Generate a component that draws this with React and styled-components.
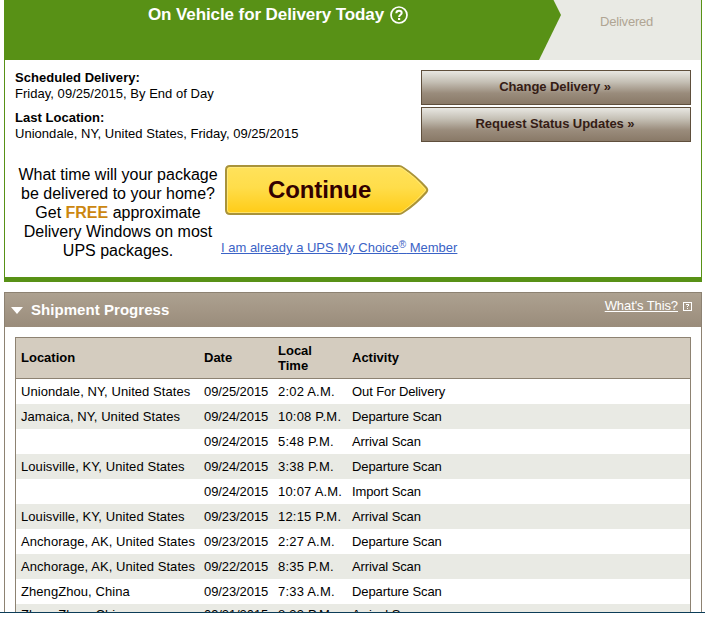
import React from 'react';
import styled, { createGlobalStyle } from 'styled-components';

const GlobalStyle = createGlobalStyle`
  * {
    box-sizing: border-box;
  }

  body {
    margin: 0;
    background: #fff;
    color: #000;
    font: 13px/16px "Liberation Sans", Arial, sans-serif;
  }
`;

const Page = styled.div`
  height: 617px;
  overflow: hidden;
`;

const Viewport = styled.div`
  height: 613px;
  padding: 0 3px 0 4px;
  overflow: hidden;
  border-bottom: 1px solid #0c3d58;
`;

const StatusPanel = styled.section`
  height: 282px;
  border: solid #589116;
  border-width: 0 1px 5px 1px;
`;

const StepBar = styled.div`
  display: flex;
  height: 60px;
  margin-left: -1px;
  background: #e9eae4;
`;

const CurrentStep = styled.div`
  display: flex;
  justify-content: center;
  align-items: flex-start;
  gap: 6px;
  width: 557px;
  padding: 5px 9px 0 0;
  background: #589116;
  color: #fff;
  clip-path: polygon(0 0, 549.5px 0, 557px 15px, 535px 60px, 0 60px);
`;

const StepTitle = styled.h1`
  margin: 0;
  font-size: 17px;
  line-height: 20px;
  letter-spacing: -0.09px;
`;

const NextStep = styled.div`
  flex: 1;
  padding: 14px 0 0 39px;
  color: #b0a593;
  letter-spacing: -0.2px;
`;

const StatusBody = styled.div`
  display: flex;
  justify-content: space-between;
  height: 103px;
  padding: 10px 10px 0 10px;
`;

const Details = styled.dl`
  margin: 0;
  letter-spacing: 0.03px;

  dt {
    font-weight: bold;
  }

  dd {
    margin: 0 0 8px;
  }
`;

const Actions = styled.div`
  display: flex;
  flex-direction: column;
  gap: 2px;
  width: 270px;
`;

const ActionButton = styled.button`
  height: 35px;
  padding: 0 2px 2px 0;
  border: 1px solid #5f4f3c;
  background: linear-gradient(#e8e7e2, #c5c0b5 33%, #9a8c7c 67%, #897967);
  color: #351c15;
  font: bold 13px/16px "Liberation Sans", Arial, sans-serif;
  letter-spacing: -0.06px;
`;

const Promo = styled.div`
  display: flex;
  height: 114px;
`;

const PromoText = styled.p`
  width: 216px;
  margin: 2px 0 0 5px;
  font-size: 16px;
  line-height: 19px;
  text-align: center;

  strong {
    color: #cc8710;
  }
`;

const PromoLinks = styled.div`
  display: flex;
  flex-direction: column;
  align-items: flex-start;
  margin-left: -5px;
  padding-top: 2px;
`;

const ContinueButton = styled.button`
  display: grid;
  margin: 0 0 0 4px;
  padding: 0;
  border: 0;
  background: none;
  color: #330000;
  font: bold 24px/28px "Liberation Sans", Arial, sans-serif;

  > * {
    grid-area: 1 / 1;
  }
`;

const ContinueLabel = styled.span`
  align-self: center;
  padding-left: 43px;
  text-align: left;
  letter-spacing: -0.1px;
`;

const MemberLink = styled.a`
  margin-top: 25px;
  color: #3b63c6;
  text-decoration: underline;
  white-space: nowrap;

  sup {
    font-size: 10px;
    line-height: 0;
    vertical-align: 4px;
  }
`;

const ProgressPanel = styled.section`
  margin-top: 10px;
  border: 1px solid #8d8272;
  border-bottom: 0;
`;

const ProgressHeader = styled.header`
  display: flex;
  height: 34px;
  padding: 0 9px 0 6px;
  background: linear-gradient(#ada190, #9a8c7b);
  color: #fff;
`;

const Caret = styled.span`
  margin: 14px 7px 0 0;
  border: solid transparent;
  border-width: 7px 6.5px 0;
  border-top-color: #fff;
  align-self: flex-start;
`;

const ProgressTitle = styled.h2`
  flex: 1;
  margin: 0;
  font-size: 15px;
  line-height: 34px;
  letter-spacing: 0.05px;
  text-indent: 1px;
`;

const HelpLink = styled.a`
  display: flex;
  gap: 5px;
  padding-top: 5px;
  text-decoration: none;

  span {
    text-decoration: underline;
    letter-spacing: -0.1px;
  }

  svg {
    margin-top: 4px;
  }
`;

const TableWrap = styled.div`
  padding: 10px;
`;

const Table = styled.div`
  border: 1px solid #8d8272;
`;

const Row = styled.div`
  display: grid;
  grid-template-columns: 183px 74px 74px 1fr;
  align-items: center;
  height: 25px;
  padding-left: 5px;
  background: ${({ $shaded }) => ($shaded ? '#e9eae4' : '#fff')};
  white-space: nowrap;

  &:last-child {
    padding-bottom: 3px;
  }
`;

const HeadRow = styled(Row)`
  height: 41px;
  padding-bottom: 1px;
  border-bottom: 1px solid #8d8272;
  background: #d4ccbf;
  font-weight: bold;
  line-height: 15px;
`;

const Cell = styled.span`
  letter-spacing: ${({ $tracking }) => $tracking}px;
`;

const scans = [
  ['Uniondale, NY, United States', '09/25/2015', '2:02 A.M.', 'Out For Delivery'],
  ['Jamaica, NY, United States', '09/24/2015', '10:08 P.M.', 'Departure Scan'],
  ['', '09/24/2015', '5:48 P.M.', 'Arrival Scan'],
  ['Louisville, KY, United States', '09/24/2015', '3:38 P.M.', 'Departure Scan'],
  ['', '09/24/2015', '10:07 A.M.', 'Import Scan'],
  ['Louisville, KY, United States', '09/23/2015', '12:15 P.M.', 'Arrival Scan'],
  ['Anchorage, AK, United States', '09/23/2015', '2:27 A.M.', 'Departure Scan'],
  ['Anchorage, AK, United States', '09/22/2015', '8:35 P.M.', 'Arrival Scan'],
  ['ZhengZhou, China', '09/23/2015', '7:33 A.M.', 'Departure Scan'],
  ['ZhengZhou, China', '09/21/2015', '8:33 P.M.', 'Arrival Scan'],
];

const HelpCircle = () => (
  <svg width="18" height="19" viewBox="0 0 18 19" fill="none" stroke="#fff">
    <circle cx="9" cy="10" r="8" strokeWidth="1.7" />
    <path d="M6.300 8.200c.1-1.700 1.200-2.500 2.700-2.500s2.700.9 2.700 2.300c0 1.800-2.600 1.900-2.600 4" strokeWidth="2" />
    <path d="M8 14h2.200" strokeWidth="2" />
  </svg>
);

const HelpSquare = () => (
  <svg width="9" height="9" viewBox="0 0 9 9" fill="none" stroke="#fff" shapeRendering="crispEdges">
    <rect x=".5" y=".5" width="8" height="8" />
    <path d="M3 2.500h3M5.500 3v1M4 4.500h1M4 6.500h1" />
  </svg>
);

const ContinueShape = () => (
  <svg width="204" height="50" viewBox="0 0 204 50">
    <defs>
      <linearGradient id="gold" x2="0" y2="1">
        <stop offset="0" stopColor="#ffe25c" />
        <stop offset=".45" stopColor="#ffdd4a" />
        <stop offset="1" stopColor="#ffcb15" />
      </linearGradient>
    </defs>
    <path
      d="M5 1H174Q176 1 178 2.500Q191 11 201.500 23Q203 25 201.500 27Q191 39 178 47.500Q176 49 174 49H5Q1 49 1 45V5Q1 1 5 1Z"
      fill="url(#gold)"
      stroke="#a9933a"
      strokeWidth="2"
    />
    <path
      d="M5 2.500H174Q176 2.500 178 4Q190 12 200 24Q201 25 200 26Q190 38 178 46Q176 47.500 174 47.500H5Q2.500 47.500 2.500 45V5Q2.500 2.500 5 2.500Z"
      fill="none"
      stroke="#ffec8c"
      strokeOpacity=".7"
    />
  </svg>
);

const App = () => (
  <Page>
    <GlobalStyle />
    <Viewport>
      <StatusPanel>
        <StepBar>
          <CurrentStep>
            <StepTitle>On Vehicle for Delivery Today</StepTitle>
            <HelpCircle />
          </CurrentStep>
          <NextStep>Delivered</NextStep>
        </StepBar>
        <StatusBody>
          <Details>
            <dt>Scheduled Delivery:</dt>
            <dd>Friday, 09/25/2015, By End of Day</dd>
            <dt>Last Location:</dt>
            <dd>Uniondale, NY, United States, Friday, 09/25/2015</dd>
          </Details>
          <Actions>
            <ActionButton>Change Delivery »</ActionButton>
            <ActionButton>Request Status Updates »</ActionButton>
          </Actions>
        </StatusBody>
        <Promo>
          <PromoText>
            What time will your package
            <br />
            be delivered to your home?
            <br />
            Get <strong>FREE</strong> approximate
            <br />
            Delivery Windows on most
            <br />
            UPS packages.
          </PromoText>
          <PromoLinks>
            <ContinueButton>
              <ContinueShape />
              <ContinueLabel>Continue</ContinueLabel>
            </ContinueButton>
            <MemberLink>
              I am already a UPS My Choice<sup>®</sup> Member
            </MemberLink>
          </PromoLinks>
        </Promo>
      </StatusPanel>
      <ProgressPanel>
        <ProgressHeader>
          <Caret />
          <ProgressTitle>Shipment Progress</ProgressTitle>
          <HelpLink>
            <span>What&apos;s This?</span>
            <HelpSquare />
          </HelpLink>
        </ProgressHeader>
        <TableWrap>
          <Table>
            <HeadRow>
              <span>Location</span>
              <span>Date</span>
              <span>
                Local
                <br />
                Time
              </span>
              <span>Activity</span>
            </HeadRow>
            {scans.map(([location, date, time, activity], i) => (
              <Row key={`${date} ${time}`} $shaded={i % 2 === 1}>
                <Cell $tracking={0.07}>{location}</Cell>
                <Cell $tracking={-0.09}>{date}</Cell>
                <Cell $tracking={0.2}>{time}</Cell>
                <Cell $tracking={-0.1}>{activity}</Cell>
              </Row>
            ))}
          </Table>
        </TableWrap>
      </ProgressPanel>
    </Viewport>
  </Page>
);

export default App;
